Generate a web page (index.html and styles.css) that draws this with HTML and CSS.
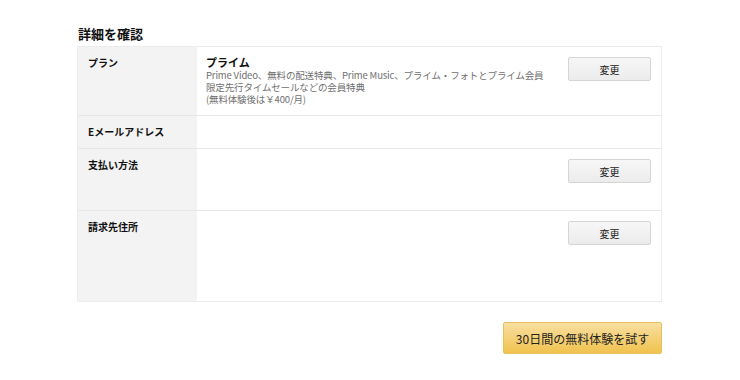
FILE: index.html
```html
<!DOCTYPE html>
<html lang="ja">
<head>
  <meta charset="UTF-8" />
  <title>詳細を確認</title>
  <link rel="stylesheet" href="styles.css">
</head>
<body>
  <div class="page">
    <h2 class="title">詳細を確認</h2>

    <div class="details">
      <div class="row row-plan">
        <div class="label">プラン</div>
        <div class="value">
          <div class="plan-name">プライム</div>
          <div class="plan-desc">Prime Video、無料の配送特典、Prime Music、プライム・フォトとプライム会員</div>
          <div class="plan-desc">限定先行タイムセールなどの会員特典</div>
          <div class="plan-desc">(無料体験後は￥400/月)</div>
        </div>
        <div class="action"><button class="change-btn">変更</button></div>
      </div>

      <div class="row row-mail">
        <div class="label">Eメールアドレス</div>
        <div class="value"></div>
      </div>

      <div class="row row-pay">
        <div class="label">支払い方法</div>
        <div class="value"></div>
        <div class="action"><button class="change-btn">変更</button></div>
      </div>

      <div class="row row-address">
        <div class="label">請求先住所</div>
        <div class="value"></div>
        <div class="action"><button class="change-btn">変更</button></div>
      </div>
    </div>

    <div class="footer">
      <button class="trial-btn">30日間の無料体験を試す</button>
    </div>
  </div>
</body>
</html>
```

FILE: styles.css
```css
body {
  margin: 0;
  font-family: "Noto Sans CJK JP", "Noto Sans", sans-serif;
  background-color: #fff;
  color: #111;
}

.page {
  width: 585px;
  margin-left: 77px;
  padding-top: 26px;
}

.title {
  margin: 0 0 4px 1px;
  font-size: 13px;
  font-weight: bold;
  line-height: 16px;
}

.details {
  border: 1px solid #ececec;
}

.row {
  display: flex;
  border-top: 1px solid #e7e7e7;
}

.row:first-child {
  border-top: none;
}

.label {
  width: 109px;
  flex-shrink: 0;
  background-color: #f3f3f3;
  padding: 9px 0 0 10px;
  font-size: 10px;
  font-weight: bold;
  line-height: 14px;
}

.value {
  flex: 1;
  min-width: 0;
  padding: 9px 0 0 9px;
  font-size: 10px;
  line-height: 12px;
}

.action {
  padding: 10px 10px 0 0;
}

.row-plan { height: 68px; }
.row-mail { height: 32px; }
.row-mail .label { padding-top: 9px; }
.row-pay { height: 61px; }
.row-address { height: 90px; }

.plan-name {
  font-weight: bold;
  font-size: 11px;
  line-height: 13px;
}

.plan-desc {
  color: #6f6f6f;
  font-size: 9.5px;
  letter-spacing: -0.15px;
  white-space: nowrap;
}

.change-btn {
  display: block;
  width: 83px;
  height: 24px;
  background: linear-gradient(#f7f7f7, #ececec);
  border: 1px solid #d5d5d5;
  border-radius: 2px;
  font-family: inherit;
  font-size: 10px;
  color: #222;
  padding: 0;
}

.footer {
  display: flex;
  justify-content: flex-end;
  padding-top: 20px;
}

.trial-btn {
  width: 159px;
  height: 32px;
  background: linear-gradient(#f8dfa1, #f0c24e);
  border: 1px solid #e8c060;
  border-radius: 2px;
  font-family: inherit;
  font-size: 12px;
  color: #222;
  padding: 0;
}
```
